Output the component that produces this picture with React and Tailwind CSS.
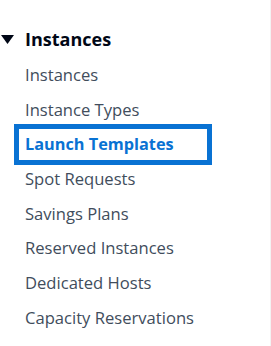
import React from "react";

const items = [
  "Instances",
  "Instance Types",
  "Launch Templates",
  "Spot Requests",
  "Savings Plans",
  "Reserved Instances",
  "Dedicated Hosts",
  "Capacity Reservations",
];

function App() {
  const active = "Launch Templates";

  return (
    <div
      className="w-[271px] h-[346px] bg-white border-r border-[#f3f3f3] overflow-hidden"
      style={{ fontFamily: '"Open Sans", "Noto Sans", sans-serif' }}
    >
      <div className="pt-[27px]">
        {/* section header */}
        <div className="flex items-center h-[24px]">
          <svg width="13" height="9" viewBox="0 0 13 9" className="ml-[1px] mt-[1px]">
            <polygon points="0,0 13,0 6.5,9" fill="#000716" />
          </svg>
          <span className="ml-[11px] text-[18px] leading-[24px] font-bold text-[#000716]">
            Instances
          </span>
        </div>

        <ul className="mt-[7px]">
          {items.map((label) => (
            <li
              key={label}
              className={
                label === active
                  ? "ml-[17px] w-[192px] h-[34.7px] pl-[8px] text-[16.3px] leading-[34.7px] font-bold text-[#0972d3] outline-[5px] outline-solid outline-[#0972d3] -outline-offset-2"
                  : "ml-[17px] w-[192px] h-[34.7px] pl-[8px] text-[16.6px] leading-[34.7px] text-[#414d5c]"
              }
            >
              {label}
            </li>
          ))}
        </ul>
      </div>
    </div>
  );
}

export default App;
